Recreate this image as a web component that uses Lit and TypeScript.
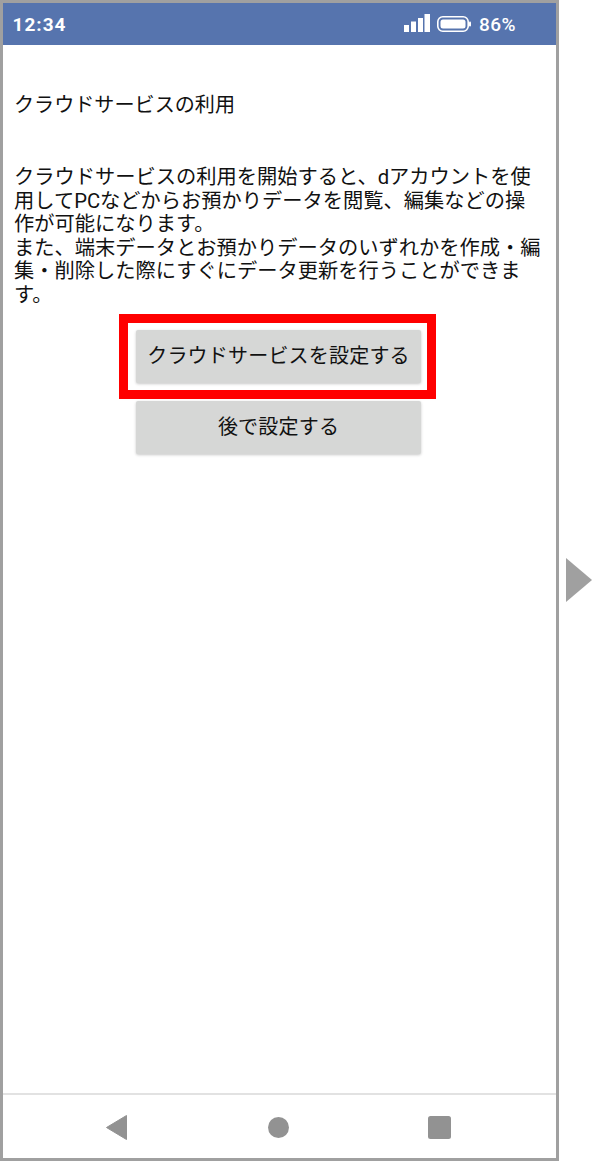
import { LitElement, html, css } from "lit";
import { customElement } from "lit/decorators.js";

@customElement("app-root")
export class AppRoot extends LitElement {
  static styles = css`
    :host {
      display: flex;
      width: 596px;
      height: 1161px;
      background: #fff;
      font-family: "Roboto", "Noto Sans CJK JP", sans-serif;
      color: #111;
      overflow: hidden;
    }
    .frame {
      box-sizing: border-box;
      width: 559px;
      height: 1161px;
      border: 3.5px solid #a0a0a0;
      display: flex;
      flex-direction: column;
      flex: none;
    }
    .status {
      height: 42px;
      flex: none;
      background: #5674ae;
      color: #fff;
      display: flex;
      align-items: center;
      justify-content: space-between;
      padding: 0 40px 0 9.5px;
    }
    .time {
      font-weight: 700;
      font-size: 19px;
      letter-spacing: 1px;
    }
    .right {
      display: flex;
      align-items: center;
    }
    .signal {
      margin: -2px 7px 0 0;
    }
    .battery {
      margin-right: 8px;
    }
    .pct {
      font-size: 19px;
      font-weight: 500;
      letter-spacing: 0.5px;
    }
    .content {
      flex: 1;
      padding: 0 11px;
      font-size: 20.25px;
      line-height: 23.6px;
    }
    .title {
      margin: 48px 0 0;
      font-size: 20.1px;
      line-height: 24px;
    }
    .body {
      margin: 49px 0 0;
      white-space: nowrap;
    }
    .buttons {
      margin: 22.5px 0 0 122px;
      width: 285px;
      display: flex;
      flex-direction: column;
      gap: 18px;
      position: relative;
    }
    .btn {
      height: 53px;
      background: #d6d7d6;
      border-radius: 2px;
      box-shadow: 0 1px 3px rgba(0, 0, 0, 0.22);
      display: flex;
      align-items: center;
      justify-content: center;
      font-size: 20px;
      letter-spacing: 0.2px;
    }
    .mark {
      position: absolute;
      left: -17px;
      top: -16px;
      width: 317px;
      height: 85px;
      box-sizing: border-box;
      border: 9.5px solid #ff0000;
    }
    .nav {
      height: 65px;
      flex: none;
      border-top: 2px solid #e2e2e2;
      display: grid;
      grid-template-columns: 162.5px 159.5px 23px;
      padding: 20px 0 0 102.5px;
      box-sizing: border-box;
      align-items: start;
    }
    .nav svg { display: block; }
    .side {
      flex: 1;
      display: flex;
      align-items: flex-start;
      padding: 558px 0 0 7px;
    }
  `;

  render() {
    return html`
      <div class="frame">
        <div class="status">
          <span class="time">12:34</span>
          <div class="right">
            <svg class="signal" width="26" height="18" viewBox="0 0 26 18">
              <rect x="0" y="11" width="5" height="7" fill="#fff" />
              <rect x="7" y="7.5" width="5" height="10.5" fill="#fff" />
              <rect x="14" y="4" width="5" height="14" fill="#fff" />
              <rect x="20.5" y="0" width="5.5" height="18" fill="#fff" />
            </svg>
            <svg class="battery" width="34" height="16" viewBox="0 0 34 16">
              <rect x="0.8" y="0.8" width="30.4" height="14.4" rx="5" fill="none" stroke="#fff" stroke-width="1.6" />
              <rect x="3.5" y="3.5" width="25" height="9" rx="2.5" fill="#fff" />
              <rect x="32" y="5.5" width="2" height="5" rx="1" fill="#fff" />
            </svg>
            <span class="pct">86%</span>
          </div>
        </div>
        <div class="content">
          <p class="title">クラウドサービスの利用</p>
          <div class="body">
            クラウドサービスの利用を開始すると、dアカウントを使<br />
            用してPCなどからお預かりデータを閲覧、編集などの操<br />
            作が可能になります。<br />
            また、端末データとお預かりデータのいずれかを作成・編<br />
            集・削除した際にすぐにデータ更新を行うことができま<br />
            す。
          </div>
          <div class="buttons">
            <div class="btn">クラウドサービスを設定する</div>
            <div class="btn">後で設定する</div>
            <div class="mark"></div>
          </div>
        </div>
        <div class="nav">
          <svg width="21" height="25" viewBox="0 0 21 25">
            <path d="M20.5 0.5 V24.5 L0.5 12.5 Z" fill="#929292" stroke="#929292" stroke-width="1" stroke-linejoin="round" />
          </svg>
          <svg width="21" height="25" viewBox="0 0 21 25">
            <circle cx="10.5" cy="12.5" r="10.5" fill="#929292" />
          </svg>
          <svg width="23" height="25" viewBox="0 0 23 25">
            <rect x="0" y="1" width="23" height="23" rx="2.5" fill="#929292" />
          </svg>
        </div>
      </div>
      <div class="side">
        <svg width="26" height="44" viewBox="0 0 26 44">
          <path d="M0 0 L26 22 L0 44 Z" fill="#a0a0a0" />
        </svg>
      </div>
    `;
  }
}
